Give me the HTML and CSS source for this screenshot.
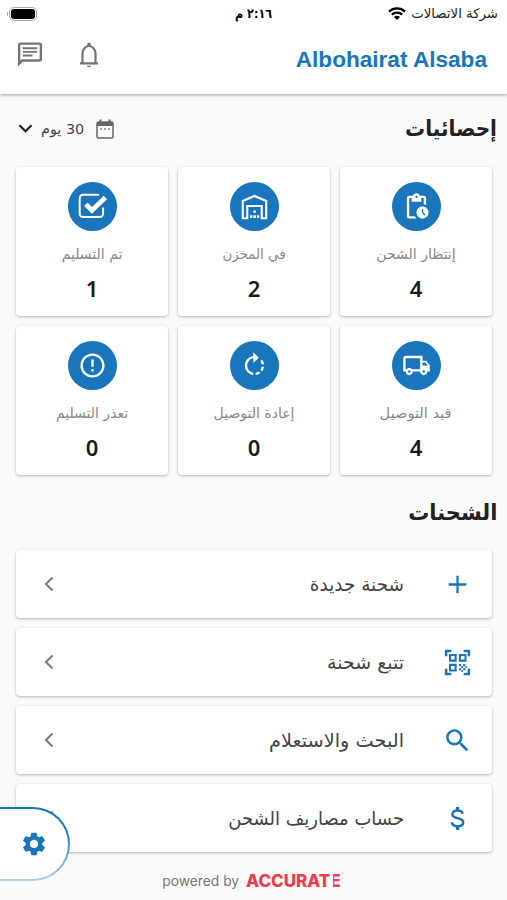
FILE: index.html
```
<!DOCTYPE html>
<html lang="ar" dir="rtl">
	<head>
		<meta charset="utf-8">
		<title>Albohairat Alsaba</title>
		<link rel="stylesheet" href="styles.css">
	</head>
	<body>
		<div id="header">
			<div class="status">
				<div class="carrier">
					<span>شركة الاتصالات</span>
					<svg class="wifi" viewBox="0 0 18 13"><path d="M1 4.600C5.500 .4 12.500 .4 17 4.600" fill="none" stroke="#000" stroke-width="2.300"/><path d="M3.800 7.700C6.800 5 11.200 5 14.200 7.700" fill="none" stroke="#000" stroke-width="2.300"/><path d="M6 10C7.600 8.400 10.400 8.400 12 10L9 13z"/></svg>
				</div>
				<span class="clock">٢:١٦ م</span>
				<div class="battery"><i></i></div>
			</div>
			<div class="bar">
				<h1 dir="ltr">Albohairat Alsaba</h1>
				<div class="tools">
					<svg class="bell" viewBox="0 0 20 26"><path d="M1 21.300h18M3.500 21V11.500a6.500 7.500 0 0 1 13 0V21" fill="none" stroke="#757575" stroke-width="2.200"/><path d="M8.200 4V2.300a1.800 1.800 0 0 1 3.600 0V4zM8 23.700h4a2 1.600 0 0 1-4 0z" fill="#757575"/></svg>
					<svg class="chat" viewBox="0 0 24 24"><path d="M4 4h16v12H5.170L4 17.170V4m0-2c-1.100 0-1.990.9-1.990 2L2 22l4-4h14c1.100 0 2-.9 2-2V4c0-1.100-.9-2-2-2H4zm2 10h8v1.600H6V12zm0-3h12v1.600H6V9zm0-3h12v1.600H6V6z"/></svg>
				</div>
			</div>
		</div>

		<div class="head stats-head">
			<h2 class="t1">إحصائيات</h2>
			<div class="period">
				<svg class="cal" viewBox="0 0 18 20"><path d="M2.500 3h13a1.500 1.500 0 0 1 1.500 1.500v13a1.500 1.500 0 0 1-1.500 1.500h-13A1.500 1.500 0 0 1 1 17.500v-13A1.500 1.500 0 0 1 2.500 3z" fill="none" stroke="#666" stroke-width="1.500"/><path d="M1 3h16v4H1zM3.500 .5h2V4h-2zM12.500 .5h2V4h-2zM4.300 9.300h1.600v1.500H4.300zM8.200 9.300h1.600v1.500H8.200zM12.100 9.300h1.600v1.500h-1.600z" fill="#666"/></svg>
				<span class="days">30 يوم</span>
				<svg class="down" viewBox="0 0 14 9"><path d="M1 1.200l6 6 6-6" fill="none" stroke="#222" stroke-width="2.200"/></svg>
			</div>
		</div>

		<div id="stats">
			<div class="card">
				<div class="round"><svg viewBox="0 0 24 24"><path d="M17 12c-2.760 0-5 2.240-5 5s2.240 5 5 5 5-2.240 5-5-2.240-5-5-5zm1.650 7.350L16.500 17.200V14h1v2.790l1.850 1.850-.7.710zM18 3h-3.180C14.400 1.840 13.300 1 12 1s-2.400.84-2.820 2H6c-1.100 0-2 .9-2 2v15c0 1.100.9 2 2 2h6.110c-.59-.57-1.070-1.250-1.420-2H6V5h2v3h8V5h2v5.080c.71.1 1.380.31 2 .6V5c0-1.100-.9-2-2-2zm-6 2c-.55 0-1-.45-1-1s.45-1 1-1 1 .45 1 1-.45 1-1 1z"/></svg></div>
				<p>إنتظار الشحن</p>
				<b>4</b>
			</div>
			<div class="card">
				<div class="round"><svg viewBox="0 0 26 26"><path d="M2.500 23.500V8L13 3.500 23.500 8v15.500h-4V12.500h-13v11z" fill="none" stroke="#fff" stroke-width="1.900"/><path d="M12 16.500h2.200v2.200H12zM9 20.800h2v2.500H9zM12 20.800h2.200v2.500H12zM15.200 20.800h2v2.500h-2z"/></svg></div>
				<p class="p2">في المخزن</p>
				<b>2</b>
			</div>
			<div class="card">
				<div class="round"><svg viewBox="0 0 26 26"><path d="M19 2.500H4.500a3 3 0 0 0-3 3v14a3 3 0 0 0 3 3h15a3 3 0 0 0 3-3V14" fill="none" stroke="#fff" stroke-width="1.800"/><path d="M7 11l5.500 5.500L24.500 5" fill="none" stroke="#fff" stroke-width="4.300"/></svg></div>
				<p>تم التسليم</p>
				<b>1</b>
			</div>
			<div class="card">
				<div class="round"><svg viewBox="0 0 24 24"><path d="M20 8h-3V4H3c-1.100 0-2 .9-2 2v11h2c0 1.660 1.340 3 3 3s3-1.340 3-3h6c0 1.660 1.340 3 3 3s3-1.340 3-3h2v-5l-3-4zm-.5 1.500l1.960 2.500H17V9.500h2.500zM6 18c-.55 0-1-.45-1-1s.45-1 1-1 1 .45 1 1-.45 1-1 1zm2.220-3c-.55-.61-1.330-1-2.220-1s-1.670.39-2.220 1H3V6h12v9H8.220zM18 18c-.55 0-1-.45-1-1s.45-1 1-1 1 .45 1 1-.45 1-1 1z"/></svg></div>
				<p class="p4">قيد التوصيل</p>
				<b>4</b>
			</div>
			<div class="card">
				<div class="round"><svg viewBox="0 0 24 24"><path d="M15.550 5.550L11 1v3.070C7.060 4.560 4 7.920 4 12s3.050 7.440 7 7.930v-2.020c-2.840-.48-5-2.940-5-5.910s2.160-5.430 5-5.910V10l4.550-4.450z"/><path d="M19.930 11c-.17-1.390-.72-2.730-1.620-3.890l-1.420 1.420c.54.75.88 1.600 1.020 2.470h2.020zM13 17.900v2.020c1.390-.17 2.740-.71 3.900-1.610l-1.440-1.440c-.75.54-1.590.89-2.460 1.030zm3.890-2.420l1.420 1.410c.9-1.160 1.450-2.500 1.620-3.890h-2.020c-.14.87-.48 1.720-1.020 2.480z"/></svg></div>
				<p>إعادة التوصيل</p>
				<b>0</b>
			</div>
			<div class="card">
				<div class="round"><svg viewBox="0 0 24 24"><path d="M11 15h2v2h-2zm0-8h2v6h-2zm.990-5C6.470 2 2 6.480 2 12s4.470 10 9.990 10C17.520 22 22 17.520 22 12S17.520 2 11.990 2zM12 20c-4.420 0-8-3.580-8-8s3.580-8 8-8 8 3.580 8 8-3.580 8-8 8z"/></svg></div>
				<p>تعذر التسليم</p>
				<b>0</b>
			</div>
		</div>

		<div class="head ship-head">
			<h2 class="t2">الشحنات</h2>
		</div>

		<div id="list">
			<div class="row">
				<svg class="ico" viewBox="0 0 28 28"><path d="M14 5.500v17M5.500 14h17" fill="none" stroke="#1976bc" stroke-width="2.200"/></svg>
				<span class="label l1">شحنة جديدة</span>
				<svg class="go" viewBox="0 0 10 16"><path d="M8.500 1.500L2 8l6.500 6.500" fill="none" stroke="#808080" stroke-width="2.200"/></svg>
			</div>
			<div class="row">
				<svg class="ico" viewBox="0 0 28 28"><path d="M3 8V3h5M20 3h5v5M25 20v5h-5M8 25H3v-5" fill="none" stroke="#1976bc" stroke-width="2.400"/><path d="M6.800 6.800h5.400v5.400H6.800zM16.300 6.800h5.400v5.400h-5.400zM6.800 16.300h5.400v5.400H6.800z" fill="none" stroke="#1976bc" stroke-width="2"/><path d="M15.500 15.500h2v2h-2zM19.500 15.500h2v2h-2zM17.500 17.500h2v2h-2zM21.500 17.500h1.500v2h-1.500zM15.500 19.500h2v2h-2zM19.500 19.500h2v2h-2zM17.500 21.500h2v1.500h-2z"/></svg>
				<span class="label">تتبع شحنة</span>
				<svg class="go" viewBox="0 0 10 16"><path d="M8.500 1.500L2 8l6.500 6.500" fill="none" stroke="#808080" stroke-width="2.200"/></svg>
			</div>
			<div class="row">
				<svg class="ico" viewBox="0.500 0.500 23 23"><path d="M15.500 14h-.79l-.28-.27C15.410 12.590 16 11.110 16 9.500 16 5.910 13.090 3 9.500 3S3 5.910 3 9.500 5.910 16 9.500 16c1.610 0 3.090-.59 4.230-1.570l.27.28v.79l5 4.990L20.490 19l-4.990-5zm-6 0C7.010 14 5 11.990 5 9.500S7.010 5 9.500 5 14 7.010 14 9.500 11.990 14 9.500 14z"/></svg>
				<span class="label l3">البحث والاستعلام</span>
				<svg class="go" viewBox="0 0 10 16"><path d="M8.500 1.500L2 8l6.500 6.500" fill="none" stroke="#808080" stroke-width="2.200"/></svg>
			</div>
			<div class="row">
				<svg class="ico" viewBox="0 0 28 28"><path d="M19 9.500C18.500 7 16.500 6.200 14 6.200c-3 0-5 1.400-5 3.700 0 5.200 10.500 2.600 10.500 7.800 0 2.500-2.300 3.900-5.300 3.900-3.200 0-5.200-1.300-5.700-3.900" fill="none" stroke="#1976bc" stroke-width="2.400"/><path d="M12.400 2.800h3.200v4h-3.200zM12.400 21.200h3.200v4h-3.200z"/></svg>
				<span class="label l4">حساب مصاريف الشحن</span>
				<svg class="go" viewBox="0 0 10 16"><path d="M8.500 1.500L2 8l6.500 6.500" fill="none" stroke="#808080" stroke-width="2.200"/></svg>
			</div>
		</div>

		<div id="footer" dir="ltr">
			<span class="by">powered by</span>
			<span class="brand">ACCURAT<span class="e">E</span></span>
		</div>

		<div id="fab">
			<svg viewBox="0 0 24 24"><path d="M19.140 12.940c.04-.3.060-.61.060-.94 0-.32-.02-.64-.07-.94l2.030-1.580c.18-.14.230-.41.120-.61l-1.920-3.320c-.12-.22-.37-.29-.59-.22l-2.390.96c-.5-.38-1.030-.7-1.620-.94l-.36-2.540c-.04-.24-.24-.41-.48-.41h-3.840c-.24 0-.43.17-.47.41l-.36 2.540c-.59.24-1.130.57-1.620.94l-2.390-.96c-.22-.08-.47 0-.59.22L2.740 8.870c-.12.21-.08.47.12.61l2.030 1.580c-.05.3-.09.63-.09.94s.02.640.07.940l-2.030 1.580c-.18.140-.23.410-.12.610l1.920 3.320c.12.220.37.290.59.220l2.390-.96c.5.380 1.030.700 1.620.940l.36 2.540c.05.240.240.410.480.410h3.840c.24 0 .44-.17.470-.41l.36-2.540c.59-.24 1.130-.56 1.620-.94l2.390.96c.22.080.47 0 .590-.22l1.920-3.320c.12-.22.070-.47-.12-.61l-2.010-1.580zM12 15.600c-1.980 0-3.600-1.620-3.600-3.600s1.620-3.600 3.600-3.600 3.600 1.620 3.600 3.600-1.620 3.600-3.600 3.600z"/></svg>
		</div>
	</body>
</html>
```
FILE: styles.css
```
*{
	padding: 0;
	margin: 0;
	box-sizing: border-box;
}
body{
	width: 507px;
	height: 900px;
	overflow: hidden;
	background: #fafafa;
	font-family: "DejaVu Sans", sans-serif;
	color: #222;
}
svg{
	display: block;
	flex: none;
}
#header{
	height: 94px;
	background: #fff;
	box-shadow: 0 1px 3px rgba(0,0,0,0.35);
}
.status{
	height: 27px;
	padding: 0 9px 0 9px;
	display: grid;
	grid-template-columns: 1fr auto 1fr;
	align-items: center;
}
.carrier{
	display: flex;
	align-items: center;
	gap: 5px;
	font-size: 13.3px;
}
.wifi{
	width: 18px;
	height: 13px;
}
.clock{
	font-size: 13px;
	font-weight: bold;
	color: #000;
	transform: scaleX(0.86);
}
.battery{
	position: relative;
	justify-self: end;
	width: 28px;
	height: 14px;
	padding: 1px;
	border: 1px solid #aaa;
	border-radius: 5px;
}
.battery:after{
	content: '';
	position: absolute;
	left: -3px;
	top: 4px;
	width: 1px;
	height: 4px;
	background: #aaa;
}
.battery i{
	display: block;
	height: 10px;
	background: #000;
	border-radius: 3px;
}
.bar{
	height: 67px;
	padding: 0 20px 0 15px;
	display: flex;
	justify-content: space-between;
}
h1{
	font: bold 22.6px/66px "Liberation Sans", sans-serif;
	color: #1976bc;
}
.tools{
	display: flex;
	gap: 34px;
	padding-top: 13px;
}
.bell{
	width: 20px;
	height: 26px;
	margin-top: 2px;
}
.chat{
	width: 30px;
	height: 29px;
	fill: #757575;
}
.head{
	display: flex;
	justify-content: space-between;
	align-items: center;
	padding: 0 10px 0 18px;
}
.stats-head{
	height: 73px;
	padding-bottom: 4px;
}
h2{
	font-size: 22px;
	line-height: 40px;
	transform-origin: right center;
}
.t1{
	transform: scaleX(0.91);
}
.t2{
	transform: scaleX(0.955);
}
.period{
	display: flex;
	align-items: center;
}
.cal{
	width: 18px;
	height: 20px;
	margin-left: 12px;
}
.days{
	font-size: 14.4px;
	color: #444;
}
.down{
	width: 15px;
	height: 9px;
	margin-right: 8px;
}
#stats{
	padding: 0 15px 0 16px;
	display: grid;
	grid-template-columns: 1fr 1fr 1fr;
	gap: 10px;
}
.card,.row{
	background: #fff;
	border-radius: 4px;
	box-shadow: 0 1px 3px rgba(0,0,0,0.28);
}
.card{
	height: 149px;
	padding-top: 15px;
	display: flex;
	flex-direction: column;
	align-items: center;
}
.round{
	width: 49px;
	height: 49px;
	border-radius: 50%;
	background: #1976bc;
	display: flex;
	align-items: center;
	justify-content: center;
}
.round svg{
	width: 29px;
	height: 29px;
	fill: #fff;
}
.card p{
	margin-top: 11px;
	font-size: 14px;
	line-height: 24px;
	color: #888;
}
.card .p2{
	transform: scaleX(0.955);
}
.card .p4{
	transform: scaleX(1.04);
}
.card b{
	margin-top: 7px;
	font: 600 22px/30px "Noto Sans", sans-serif;
	color: #1a1a1a;
}
.ship-head{
	height: 75px;
}
#list{
	padding: 0 15px 0 16px;
	display: flex;
	flex-direction: column;
	gap: 10px;
}
.row{
	height: 68px;
	padding: 0 20px 0 28px;
	display: flex;
	align-items: center;
}
.ico{
	width: 29px;
	height: 29px;
	margin-left: 39px;
	fill: #1976bc;
}
.label{
	flex: 1;
	font-size: 19px;
	color: #444;
	transform-origin: right center;
}
.l1{
	transform: scaleX(0.97);
}
.l3{
	transform: scaleX(1.015);
}
.l4{
	transform: scaleX(0.946);
}
.go{
	width: 10px;
	height: 16px;
}
#footer{
	height: 48px;
	padding: 10px 4px 0 0;
	display: flex;
	justify-content: center;
	align-items: center;
	gap: 7px;
}
.by{
	font: 13.8px/20px "Inter", sans-serif;
	color: #777;
}
.brand{
	font: 800 17px/20px "Inter", sans-serif;
	color: #f03a4e;
}
.e{
	position: relative;
}
.e:after{
	content: '';
	position: absolute;
	left: 0;
	top: 0;
	width: 3px;
	height: 100%;
	background: #fafafa;
}
#fab{
	position: absolute;
	left: 0;
	top: 807px;
	width: 70px;
	height: 74px;
	border: 2px solid transparent;
	border-left: 0;
	border-radius: 0 37px 37px 0;
	background: linear-gradient(#fff,#fff) padding-box, linear-gradient(#1976bc 30%,#b5d5ea) border-box;
	display: flex;
	align-items: center;
	justify-content: flex-end;
	padding-right: 20px;
	direction: ltr;
}
#fab svg{
	width: 28px;
	height: 28px;
	fill: #1976bc;
}
```
